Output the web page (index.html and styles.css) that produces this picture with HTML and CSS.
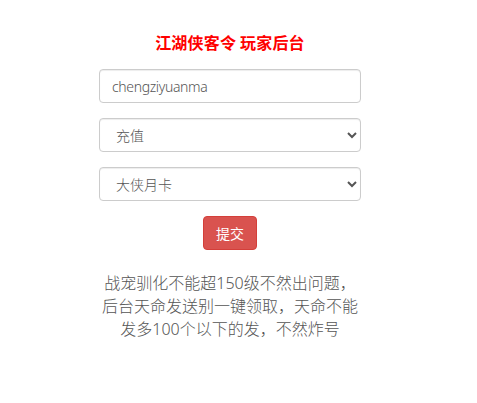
FILE: index.html
```html
<!DOCTYPE html>
<html lang="zh-CN">
<head>
<meta charset="utf-8">
<title>江湖侠客令 玩家后台</title>
<link rel="stylesheet" href="styles.css">
</head>
<body>
<div class="page">
  <div class="panel">
    <h1 class="title">江湖侠客令 玩家后台</h1>
    <form class="form">
      <div class="form-group">
        <input class="form-control text-input" type="text" value="chengziyuanma">
      </div>
      <div class="form-group">
        <select class="form-control">
          <option>充值</option>
        </select>
      </div>
      <div class="form-group">
        <select class="form-control">
          <option>大侠月卡</option>
        </select>
      </div>
      <div class="actions">
        <button type="button" class="btn-danger">提交</button>
      </div>
    </form>
    <p class="note">战宠驯化不能超150级不然出问题，后台天命发送别一键领取，天命不能发多100个以下的发，不然炸号</p>
  </div>
</div>
</body>
</html>
```
FILE: styles.css
```css
html, body {
  margin: 0;
  padding: 0;
  background: #fff;
}
body {
  font-family: "Noto Sans", "Noto Sans CJK SC", sans-serif;
  font-size: 14px;
  line-height: 1.42857;
  color: #333;
}
.page {
  width: 460px;
  padding-top: 31px;
}
.panel {
  width: 262px;
  margin: 0 auto;
}
.title {
  margin: 0 0 15px;
  font-family: "Noto Sans CJK SC", sans-serif;
  font-size: 16px;
  line-height: 23px;
  font-weight: bold;
  color: #ff0000;
  text-align: center;
  letter-spacing: 0.2px;
}
.form-group {
  margin-bottom: 15px;
}
.form-control {
  display: block;
  box-sizing: border-box;
  width: 100%;
  height: 34px;
  margin: 0;
  padding: 6px 12px;
  font-family: "Noto Sans", "Noto Sans CJK SC", sans-serif;
  font-size: 14px;
  font-weight: 300;
  line-height: 1.42857;
  color: #555;
  background: #fff;
  border: 1px solid #ccc;
  border-radius: 4px;
  box-shadow: inset 0 1px 1px rgba(0, 0, 0, 0.075);
}
.text-input {
  letter-spacing: -0.35px;
}
.actions {
  display: flex;
  justify-content: center;
  margin-bottom: 22px;
}
.btn-danger {
  box-sizing: border-box;
  height: 34px;
  padding: 6px 12px;
  font-family: "Noto Sans CJK SC", sans-serif;
  font-size: 14px;
  line-height: 20px;
  color: #fff;
  background: #d9534f;
  border: 1px solid #d43f3a;
  border-radius: 4px;
}
.note {
  margin: 0;
  font-family: "Noto Sans", "Noto Sans CJK SC", sans-serif;
  font-size: 16px;
  font-weight: 300;
  line-height: 23px;
  color: #555;
  text-align: center;
}
```
